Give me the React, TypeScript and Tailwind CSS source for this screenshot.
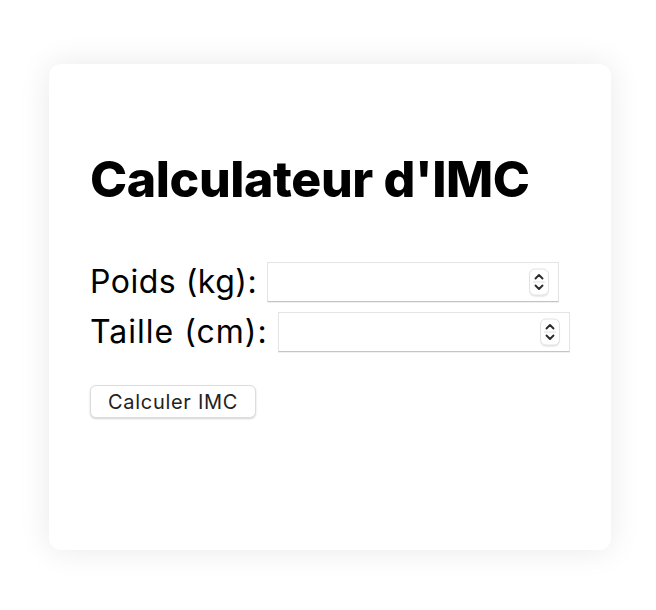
import React from "react";

function Spinner(): React.JSX.Element {
  return (
    <span className="absolute right-[9px] top-1/2 flex h-[27px] w-[20px] -translate-y-1/2 flex-col items-center justify-center rounded-[6px] border border-[#e2e2e2] bg-white shadow-[0_1px_1px_rgba(0,0,0,0.08)]">
      <svg width="12" height="25" viewBox="0 0 12 25" fill="none">
        <path d="M2.5 9 L6 5.5 L9.5 9" stroke="#2b2b2b" strokeWidth="1.9" strokeLinecap="round" strokeLinejoin="round" />
        <line x1="0" y1="12.5" x2="12" y2="12.5" stroke="#e2e2e2" strokeWidth="1" />
        <path d="M2.5 16 L6 19.5 L9.5 16" stroke="#2b2b2b" strokeWidth="1.9" strokeLinecap="round" strokeLinejoin="round" />
      </svg>
    </span>
  );
}

function Field({ label, wide }: { label: string; wide?: boolean }): React.JSX.Element {
  return (
    <div className="flex h-[50px] items-center">
      <label className={wide ? "whitespace-nowrap tracking-[1px]" : "whitespace-nowrap"}>{label}</label>
      <div className="relative ml-[10px] h-[40px] w-[292px] border border-[#e4e4e4] border-b-[#c4c4c4] bg-white shadow-[0_1px_0_rgba(0,0,0,0.06)]">
        <Spinner />
      </div>
    </div>
  );
}

export default function App(): React.JSX.Element {
  return (
    <div className="min-h-[610px] w-full bg-white pl-[49px] pt-[64px]">
      <div className="h-[486px] w-[562px] rounded-[12px] bg-white px-[41px] pt-[90px] shadow-[0_0_32px_rgba(0,0,0,0.09)]">
        <h1 className="font-['Inter',sans-serif] text-[50px] font-extrabold leading-none tracking-[-0.4px] text-black">
          Calculateur d'IMC
        </h1>
        <div className="mt-[53px] font-['Inter',sans-serif] text-[32px] font-normal tracking-[0.5px] text-black">
          <Field label="Poids (kg):" />
          <Field label="Taille (cm):" wide />
        </div>
        <button className="mt-[28px] h-[33px] rounded-[6px] border border-[#dcdcdc] bg-white px-[17px] font-['Inter',sans-serif] text-[20px] tracking-[0.7px] text-[#222] shadow-[0_1px_2px_rgba(0,0,0,0.18)]">
          Calculer IMC
        </button>
      </div>
    </div>
  );
}
